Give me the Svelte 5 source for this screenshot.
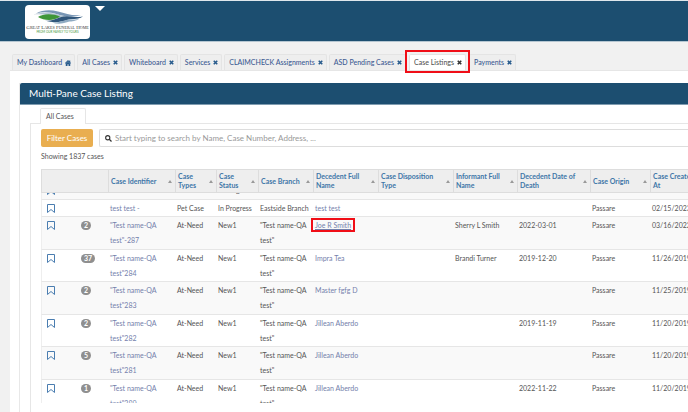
<script>
  import { onMount } from 'svelte'

  const tabs = [
    { name: 'My Dashboard', home: true },
    { name: 'All Cases' },
    { name: 'Whiteboard' },
    { name: 'Services' },
    { name: 'CLAIMCHECK Assignments' },
    { name: 'ASD Pending Cases' },
    { name: 'Case Listings' },
    { name: 'Payments' }
  ]

  const columns = [
    { label: 'Case Identifier', width: 67 },
    { label: 'Case Types', width: 41 },
    { label: 'Case Status', width: 42 },
    { label: 'Case Branch', width: 55 },
    { label: 'Decedent Full Name', width: 65 },
    { label: 'Case Disposition Type', width: 75 },
    { label: 'Informant Full Name', width: 64 },
    { label: 'Decedent Date of Death', width: 73 },
    { label: 'Case Origin', width: 60 },
    { label: 'Case Created At', width: 54 }
  ]

  const qa = '"Test name-QA test"'

  const rows = [
    { id: 'test test -', type: 'Pet Case', status: 'In Progress', branch: 'Eastside Branch', name: 'test test', created: '02/15/2023' },
    { id: 'test test -', type: 'Pet Case', status: 'In Progress', branch: 'Eastside Branch', name: 'test test', created: '02/15/2023' },
    { count: 2, id: qa + '-287', name: 'Joe R Smith', informant: 'Sherry L Smith', death: '2022-03-01', created: '03/16/2022' },
    { count: 37, id: qa + '284', name: 'Impra Tea', informant: 'Brandi Turner', death: '2019-12-20', created: '11/26/2019 14:20' },
    { count: 2, id: qa + '283', name: 'Master fgfg D', created: '11/25/2019 20:15' },
    { count: 2, id: qa + '282', name: 'Jillean Aberdo', death: '2019-11-19', created: '11/20/2019 22:10' },
    { count: 5, id: qa + '281', name: 'Jillean Aberdo', created: '11/20/2019 21:45' },
    { count: 1, id: qa + '280', name: 'Jillean Aberdo', death: '2022-11-22', created: '11/20/2019 21:30' }
  ]

  let active = 'Case Listings'
  let selected = 'Joe R Smith'
  let search = ''
  let scroller

  onMount(() => {
    scroller.scrollTop = 11
  })
</script>

<header>
  <a class="logo" href="#home" aria-label="Great Lakes Funeral Home">
    <svg class="waves" width="52" height="16" viewBox="0 0 52 16">
      <path d="M4 4.500C10 1 18 .5 26 2.500c8 2 14 4.500 23 3.500-7 2.500-15 2-23-.5C18 3 11 2.500 4 4.500z" fill="#7896b5" />
      <path d="M1 5.500c8-2 17-2.500 25 0 9 3 16 3.500 25 2-8 3.500-17 3.500-25 1.200C17 6 9 4.500 1 5.500z" fill="#b3c4d2" />
      <path d="M6 8c5-3.500 15-3.500 22-.5-5 4.500-16 4.500-22 .5z" fill="#3f9638" />
      <path d="M13 11.500c9 1.500 13-4.500 22-4.300 5 0 10 1.800 16 .3-7 4-11 1.500-16 3.500-7 2.500-14 3-22 .5z" fill="#31577c" />
      <path d="M20 13.500c8 .5 11-2.500 17-3 4-.3 7 .3 10-.5-5 3-8 2-12 3.200-5 1.800-10 2-15 .3z" fill="#8fabc2" />
    </svg>
    <span class="brand">Great Lakes Funeral Home</span>
    <span class="motto">FROM OUR FAMILY TO YOURS</span>
  </a>
  <button class="caret" aria-label="Switch location">
    <svg width="10" height="6" viewBox="0 0 10 6"><path d="M0 0h10L5 5z" fill="#fff" /></svg>
  </button>
</header>

<nav>
  {#each tabs as tab}
    <button class="tab" class:active={tab.name === active} on:click={() => { active = tab.name }}>
      {tab.name}
      {#if tab.home}
        <svg width="6" height="6" viewBox="0 0 12 12">
          <path d="M6 0L0 6l1 1.500L6 3l5 4.500L12 6l-1.500-1.500V1h-2v1.500zM1.500 7.500V12H5V8.500h2V12h3.500V7.500L6 3.500z" fill="currentColor" />
        </svg>
      {:else}
        <svg width="5" height="5" viewBox="0 0 10 10">
          <path d="M1.500 1.500l7 7M8.500 1.500l-7 7" stroke="currentColor" stroke-width="3.200" />
        </svg>
      {/if}
    </button>
  {/each}
</nav>

<main>
  <section class="panel">
    <h1>Multi-Pane Case Listing</h1>
    <div class="panes">
      <button class="pane-tab">All Cases</button>
      <div class="pane">
        <div class="filters">
          <button class="filter">Filter Cases</button>
          <label class="search">
            <svg width="7" height="7" viewBox="0 0 14 14">
              <circle cx="5.500" cy="5.500" r="4.200" fill="none" stroke="#333" stroke-width="2.200" />
              <path d="M8.500 8.500l4.500 4.500" stroke="#333" stroke-width="2.600" />
            </svg>
            <input
              aria-label="Search cases"
              placeholder="Start typing to search by Name, Case Number, Address, ..."
              bind:value={search}
            >
          </label>
        </div>
        <p class="count">Showing 1837 cases</p>

        <div class="scroller" bind:this={scroller}>
          <table>
            <colgroup>
              <col class="mark-col">
              <col class="badge-col">
              {#each columns as column}
                <col style="width: {column.width}px">
              {/each}
            </colgroup>
            <thead>
              <tr>
                <th colspan="2" aria-label="Actions"></th>
                {#each columns as column}
                  <th>
                    <div class="head">
                      <span>{column.label}</span>
                      <svg width="4" height="3" viewBox="0 0 4 3"><path d="M0 3l2-3 2 3z" fill="#999" /></svg>
                    </div>
                  </th>
                {/each}
              </tr>
            </thead>
            <tbody>
              {#each rows as row}
                <tr>
                  <td class="mark">
                    <button aria-label="Bookmark">
                      <svg width="8" height="9" viewBox="0 0 8 9">
                        <path d="M.5.500h7v8L4 5.500.5 8.500z" fill="none" stroke="#4a7db0" />
                      </svg>
                    </button>
                  </td>
                  <td class="badge-cell">
                    {#if row.count}<span class="badge">{row.count}</span>{/if}
                  </td>
                  <td><a href="#case">{row.id}</a></td>
                  <td>{row.type || 'At-Need'}</td>
                  <td>{row.status || 'New1'}</td>
                  <td>{row.branch || qa}</td>
                  <td><a href="#decedent" class:selected={row.name === selected}>{row.name}</a></td>
                  <td></td>
                  <td>{row.informant || ''}</td>
                  <td>{row.death || ''}</td>
                  <td>Passare</td>
                  <td class="created">{row.created}</td>
                </tr>
              {/each}
            </tbody>
          </table>
        </div>
      </div>
    </div>
  </section>
</main>

<style>
  :global(body) {
    background: #f1f1f1;
    font: 7px/15px Lato, "Open Sans", sans-serif;
    color: #555;
    overflow: hidden;
  }

  :global(#app) {
    display: flex;
    flex-direction: column;
    min-height: 100vh;
  }

  button {
    font: inherit;
    color: inherit;
    border: none;
    background: none;
    padding: 0;
    cursor: pointer;
  }

  svg {
    display: block;
    flex: none;
  }

  a {
    color: #7480ab;
    text-decoration: none;
  }

  header {
    display: flex;
    align-items: flex-start;
    gap: 5px;
    padding: 4px 25px 2px;
    border-top: 1px solid #dfe7ec;
    background: #1c4e70;
    border-bottom: 1px solid #b5c6d1;
  }

  .logo {
    display: flex;
    flex-direction: column;
    align-items: center;
    width: 65px;
    height: 34px;
    padding-top: 4px;
    box-sizing: border-box;
    border-radius: 4px;
    background: #fff;
    white-space: nowrap;
  }

  .brand {
    font: 5px/5px "Liberation Serif", serif;
    font-variant: small-caps;
    color: #333;
  }

  .motto {
    font: 3px/4px Lato, sans-serif;
    color: #3f9638;
  }

  .caret {
    margin-top: 1px;
  }

  nav {
    display: flex;
    gap: 2px;
    padding: 12px 12px 0;
  }

  .tab {
    position: relative;
    display: flex;
    align-items: center;
    gap: 3px;
    padding: 0 3px 0 4px;
    height: 16px;
    box-sizing: border-box;
    border: 1px solid #e4e4e4;
    border-bottom: none;
    border-radius: 2px 2px 0 0;
    background: #eee;
    color: #3c5a92;
    font-weight: 500;
    white-space: nowrap;
  }

  .tab svg {
    color: #265a8c;
  }

  .tab.active {
    z-index: 1;
    background: #fff;
    color: #555;
    margin: 0 1px;
  }

  .tab.active svg {
    color: #333;
  }

  .tab.active::after {
    content: '';
    position: absolute;
    inset: -5px -5px -3px;
    border: 2px solid #f00e17;
  }

  main {
    flex: 1;
    margin-left: 10px;
    padding: 12px 0 0 9px;
    background: #fff;
    border-top: 1px solid #e6e6e6;
  }

  .panel {
    border-left: 1px solid #e8e8e8;
    height: 100%;
  }

  h1 {
    margin: 0;
    padding: 0 9px;
    font-size: 10px;
    line-height: 21px;
    font-weight: 400;
    color: #fff;
    background: #1c4e70;
    border-bottom: 1px solid #7f9cb0;
    border-radius: 2px 0 0 0;
  }

  .panes {
    padding: 3px 0 0 10px;
  }

  .pane-tab {
    display: block;
    position: relative;
    width: 46px;
    height: 16px;
    margin: 0 0 -1px 10px;
    padding-left: 5px;
    text-align: left;
    border: 1px solid #e6e6e6;
    border-bottom: none;
    border-radius: 2px 2px 0 0;
    background: #fff;
  }

  .pane {
    padding: 5px 0 9px 10px;
    border: 1px solid #e6e6e6;
    border-width: 1px 0 0 1px;
  }

  .filters {
    display: flex;
    gap: 6px;
    font-size: 8px;
  }

  .filter {
    width: 52px;
    height: 18px;
    border-radius: 2px;
    background: #e9ae50;
    color: #fff;
  }

  .search {
    flex: 1;
    display: flex;
    align-items: center;
    gap: 3px;
    padding-left: 5px;
    border: 1px solid #ddd;
    border-right: none;
    border-radius: 2px 0 0 2px;
  }

  input {
    flex: 1;
    padding: 0;
    border: none;
    outline: none;
    font: inherit;
    color: #555;
    background: none;
  }

  input::placeholder {
    color: #999;
  }

  .count {
    margin: 2px 0 5px;
  }

  .scroller {
    height: 234px;
    overflow: hidden;
  }

  table {
    width: 664px;
    table-layout: fixed;
    border-collapse: separate;
    border-spacing: 0;
  }

  .mark-col {
    width: 28px;
  }

  .badge-col {
    width: 40px;
  }

  th {
    position: sticky;
    top: 0;
    z-index: 1;
    height: 24px;
    box-sizing: border-box;
    padding: 0 3px 0 2px;
    border: 1px solid #ddd;
    border-left: none;
    background: #eee;
    color: #4076a8;
    font-weight: 700;
    line-height: 9px;
    text-align: left;
  }

  th:first-child {
    border-left: 1px solid #ddd;
  }

  .head {
    display: flex;
    align-items: center;
    justify-content: space-between;
  }

  td {
    padding: 1px 0 1px 1px;
    border-bottom: 1px solid #e6e6e6;
    vertical-align: top;
  }

  tbody tr:nth-child(odd) td {
    background: #f9f9f9;
  }

  tbody tr:nth-child(even) td {
    padding-bottom: 0;
  }

  .mark button {
    display: block;
    padding: 3px 0 0 5px;
  }

  td:first-child {
    border-left: 1px solid #eee;
    padding-left: 0;
  }

  .badge-cell {
    padding-left: 12px;
  }

  .created {
    white-space: nowrap;
  }

  .badge {
    display: inline-block;
    min-width: 4px;
    padding: 0 3px;
    border-radius: 5px;
    background: #8f8f8f;
    color: #fff;
    line-height: 9px;
    font-weight: 700;
    text-align: center;
  }

  .selected {
    position: relative;
    text-decoration: underline;
  }

  .selected::after {
    content: '';
    position: absolute;
    inset: -3px -4px -3px -4px;
    border: 2px solid #f00e17;
  }
</style>
